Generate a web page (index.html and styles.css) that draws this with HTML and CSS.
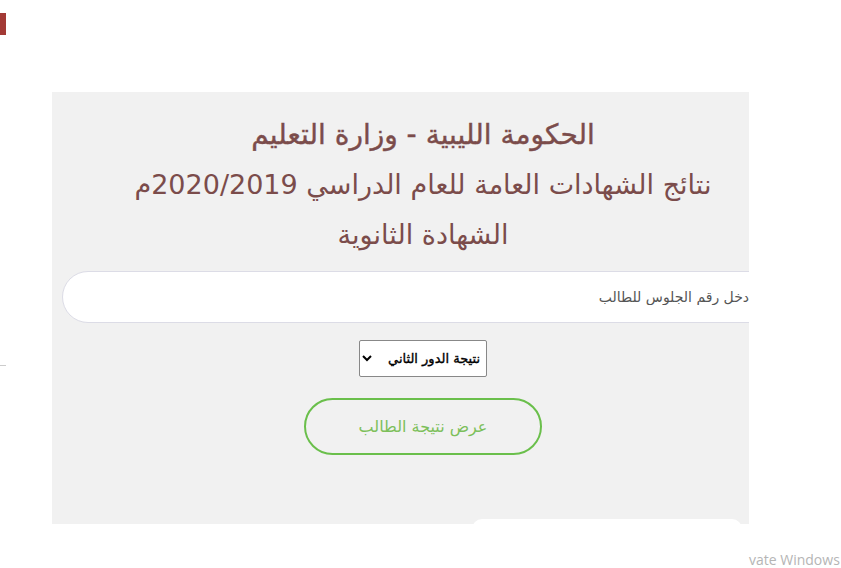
FILE: index.html
```html
<!DOCTYPE html>
<html lang="ar">
<head>
    <meta charset="UTF-8">
    <meta name="viewport" content="width=device-width, initial-scale=1.0">
    <title>نتائج الشهادات العامة</title>
    <link rel="stylesheet" href="styles.css">
</head>
<body>
    <div class="corner-mark"></div>
    <div class="side-line"></div>

    <div class="stage">
        <div class="panel-clip">
            <div class="panel" dir="rtl">
                <h1 class="title">الحكومة الليبية - وزارة التعليم</h1>
                <h2 class="subtitle">نتائج الشهادات العامة للعام الدراسي 2020/2019م</h2>
                <h2 class="subtitle">الشهادة الثانوية</h2>

                <input type="text" class="seat-input" placeholder="ادخل رقم الجلوس للطالب">

                <div class="round-row">
                    <select class="round-select">
                        <option>نتيجة الدور الثاني</option>
                        <option>نتيجة الدور الأول</option>
                    </select>
                </div>

                <button class="show-btn">عرض نتيجة الطالب</button>
            </div>
        </div>
        <div class="footer-blob"></div>
    </div>

    <div class="activate">vate Windows</div>
</body>
</html>
```

FILE: styles.css
```css
body {
    margin: 0;
    background: #fff;
    font-family: "DejaVu Sans", "Noto Sans", sans-serif;
    position: relative;
    height: 568px;
    overflow: hidden;
}
.corner-mark {
    position: absolute;
    left: 0;
    top: 13px;
    width: 6px;
    height: 22px;
    background: #a33a35;
}
.side-line {
    position: absolute;
    left: 0;
    top: 365px;
    width: 6px;
    height: 1px;
    background: #ccc;
}
.stage {
    position: relative;
    padding: 92px 0 0 52px;
}
.panel-clip {
    width: 697px;
    height: 432px;
    overflow: hidden;
    background: #f1f1f1;
}
.panel {
    width: 742px;
    text-align: center;
    padding-top: 18px;
}
.title {
    margin: 0;
    font-size: 28px;
    font-weight: normal;
    line-height: 50px;
    color: #7b4c4b;
    -webkit-text-stroke: 0.4px #7b4c4b;
}
.subtitle {
    margin: 0;
    font-size: 27px;
    font-weight: normal;
    line-height: 50px;
    color: #7b4c4b;
}
.seat-input {
    display: block;
    box-sizing: border-box;
    width: 722px;
    height: 52px;
    margin: 11px 10px 0 10px;
    padding: 0 30px;
    border: 1px solid #dcdce6;
    border-radius: 26px;
    background: #fff;
    font-family: "DejaVu Sans", sans-serif;
    font-size: 14px;
    direction: rtl;
    outline: none;
}
.seat-input::placeholder {
    color: #555;
}
.round-row {
    margin-top: 17px;
}
.round-select {
    height: 37px;
    width: 128px;
    border: 1px solid #888;
    border-radius: 2px;
    background: #fff;
    font-family: "DejaVu Sans", sans-serif;
    font-size: 13px;
    color: #000;
    -webkit-text-stroke: 0.35px #000;
    direction: rtl;
    padding: 0 2px;
}
.show-btn {
    display: block;
    margin: 21px auto 0;
    width: 238px;
    height: 57px;
    border: 2px solid #6abf4b;
    border-radius: 29px;
    background: transparent;
    color: #7cbf5a;
    font-family: "DejaVu Sans", sans-serif;
    font-size: 16px;
    cursor: pointer;
}
.footer-blob {
    position: absolute;
    left: 472px;
    top: 519px;
    width: 270px;
    height: 30px;
    background: #fff;
    border-radius: 10px 10px 0 0;
}
.activate {
    position: absolute;
    left: 749px;
    top: 550px;
    font-family: "Open Sans", "Liberation Sans", sans-serif;
    font-size: 14px;
    color: #b5b5b5;
    white-space: nowrap;
}
```
